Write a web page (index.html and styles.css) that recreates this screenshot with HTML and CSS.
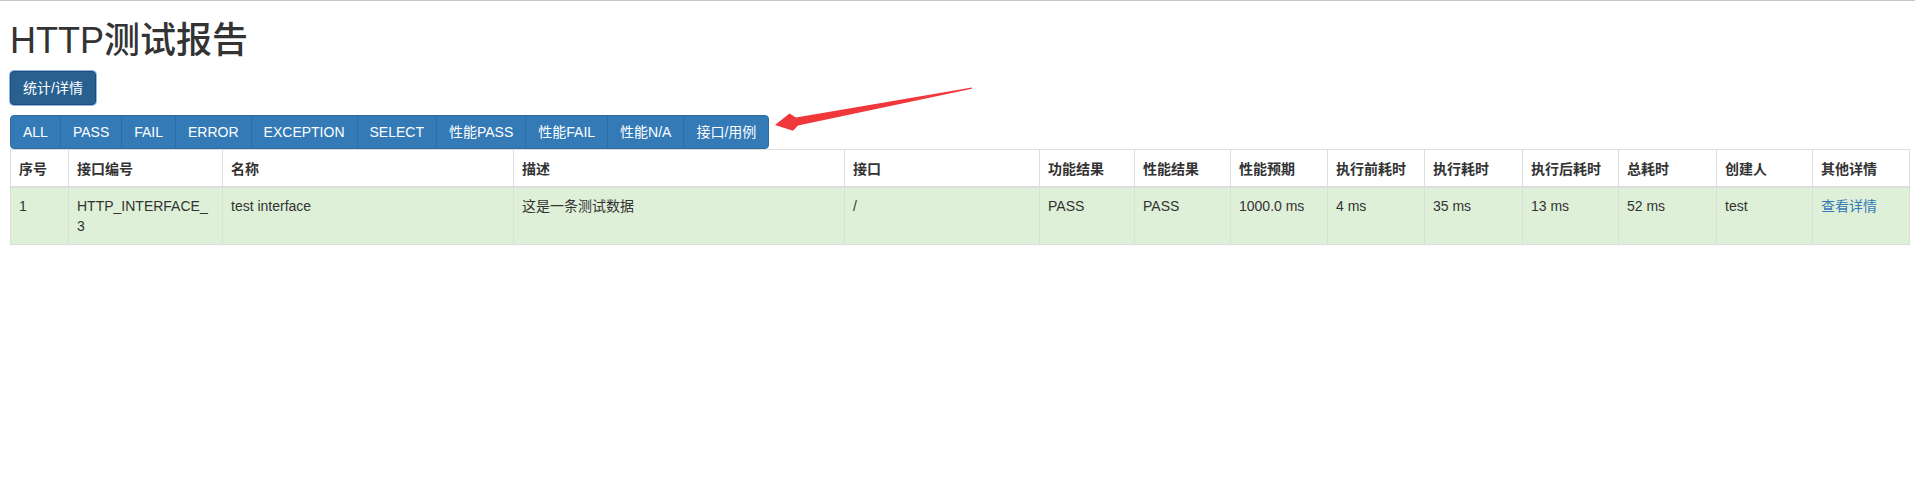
FILE: index.html
```html
<!DOCTYPE html>
<html lang="zh-CN">
<head>
<meta charset="utf-8">
<title>HTTP测试报告</title>
<link rel="stylesheet" href="styles.css">
</head>
<body>
<div class="topline"></div>
<div class="page">
  <h1 class="title">HTTP测试报告</h1>
  <button class="btn btn-stat" type="button">统计/详情</button>
  <div class="btn-group">
    <button class="btn btn-primary" type="button">ALL</button>
    <button class="btn btn-primary" type="button">PASS</button>
    <button class="btn btn-primary" type="button">FAIL</button>
    <button class="btn btn-primary" type="button">ERROR</button>
    <button class="btn btn-primary" type="button">EXCEPTION</button>
    <button class="btn btn-primary" type="button">SELECT</button>
    <button class="btn btn-primary" type="button">性能PASS</button>
    <button class="btn btn-primary" type="button">性能FAIL</button>
    <button class="btn btn-primary" type="button">性能N/A</button>
    <button class="btn btn-primary" type="button">接口/用例</button>
  </div>
  <table class="report">
    <colgroup>
      <col class="c1"><col class="c2"><col class="c3"><col class="c4"><col class="c5">
      <col class="c6"><col class="c7"><col class="c8"><col class="c9"><col class="c10">
      <col class="c11"><col class="c12"><col class="c13"><col class="c14">
    </colgroup>
    <thead>
      <tr>
        <th>序号</th><th>接口编号</th><th>名称</th><th>描述</th><th>接口</th>
        <th>功能结果</th><th>性能结果</th><th>性能预期</th><th>执行前耗时</th><th>执行耗时</th>
        <th>执行后耗时</th><th>总耗时</th><th>创建人</th><th>其他详情</th>
      </tr>
    </thead>
    <tbody>
      <tr class="success">
        <td>1</td><td class="brk">HTTP_INTERFACE_3</td><td>test interface</td><td>这是一条测试数据</td><td>/</td>
        <td>PASS</td><td>PASS</td><td>1000.0 ms</td><td>4 ms</td><td>35 ms</td>
        <td>13 ms</td><td>52 ms</td><td>test</td><td><a href="#" class="detail">查看详情</a></td>
      </tr>
    </tbody>
  </table>
</div>
<svg class="arrow" width="1915" height="502" viewBox="0 0 1915 502" aria-hidden="true">
  <polygon points="972,87.4 796,117.6 789.5,113.5 775,125 793,130.8 798,125.4 972,88.8" fill="#f0373a"/>
</svg>
</body>
</html>
```

FILE: styles.css
```css
html, body {
  margin: 0;
  padding: 0;
  background: #fff;
}
body {
  font-family: "Liberation Sans", "Noto Sans CJK SC", sans-serif;
  font-size: 14px;
  line-height: 1.42857;
  color: #333;
  position: relative;
}
.topline {
  height: 1px;
  background: #c4c4c4;
}
.page {
  padding: 0 6px 0 10px;
}
.title {
  font-family: "Liberation Sans", "Noto Sans CJK SC", sans-serif;
  font-size: 36px;
  font-weight: 500;
  line-height: 1.1;
  margin: 20px 0 10px;
  color: #333;
}
.btn {
  display: inline-block;
  font-family: "Liberation Sans", "Noto Sans CJK SC", sans-serif;
  font-size: 14px;
  line-height: 20px;
  padding: 6px 12px;
  border: 1px solid transparent;
  border-radius: 4px;
  color: #fff;
  cursor: pointer;
  margin: 0;
}
.btn-stat {
  background: #286090;
  border-color: #204d74;
  box-shadow: 0 0 0 1px #8fb8ef;
  display: block;
}
.btn-group {
  display: flex;
  width: max-content;
  margin-top: 10px;
}
.btn-primary {
  background: #337ab7;
  border-color: #2e6da4;
  border-radius: 0;
}
.btn-group .btn-primary + .btn-primary {
  margin-left: -1px;
}
.btn-group .btn-primary:first-child {
  border-radius: 4px 0 0 4px;
}
.btn-group .btn-primary:last-child {
  border-radius: 0 4px 4px 0;
}
.report {
  width: 1899px;
  table-layout: fixed;
  border-collapse: collapse;
  border-spacing: 0;
  border: 1px solid #ddd;
}
.c1 { width: 58px; }
.c2 { width: 154px; }
.c3 { width: 291px; }
.c4 { width: 331px; }
.c5 { width: 195px; }
.c6 { width: 95px; }
.c7 { width: 96px; }
.c8 { width: 97px; }
.c9 { width: 97px; }
.c10 { width: 98px; }
.c11 { width: 96px; }
.c12 { width: 98px; }
.c13 { width: 96px; }
.c14 { width: 97px; }
.report th,
.report td {
  border: 1px solid #ddd;
  padding: 8px;
  text-align: left;
  vertical-align: top;
  line-height: 20px;
}
.report th {
  font-family: "Noto Sans CJK SC", "Liberation Sans", sans-serif;
  font-weight: bold;
  vertical-align: bottom;
  border-bottom-width: 2px;
}
.report tr.success td {
  background: #dff0d8;
}
.brk {
  overflow-wrap: anywhere;
  word-break: break-all;
}
.detail {
  color: #337ab7;
  text-decoration: none;
}
.arrow {
  position: absolute;
  left: 0;
  top: 0;
  pointer-events: none;
}
```
